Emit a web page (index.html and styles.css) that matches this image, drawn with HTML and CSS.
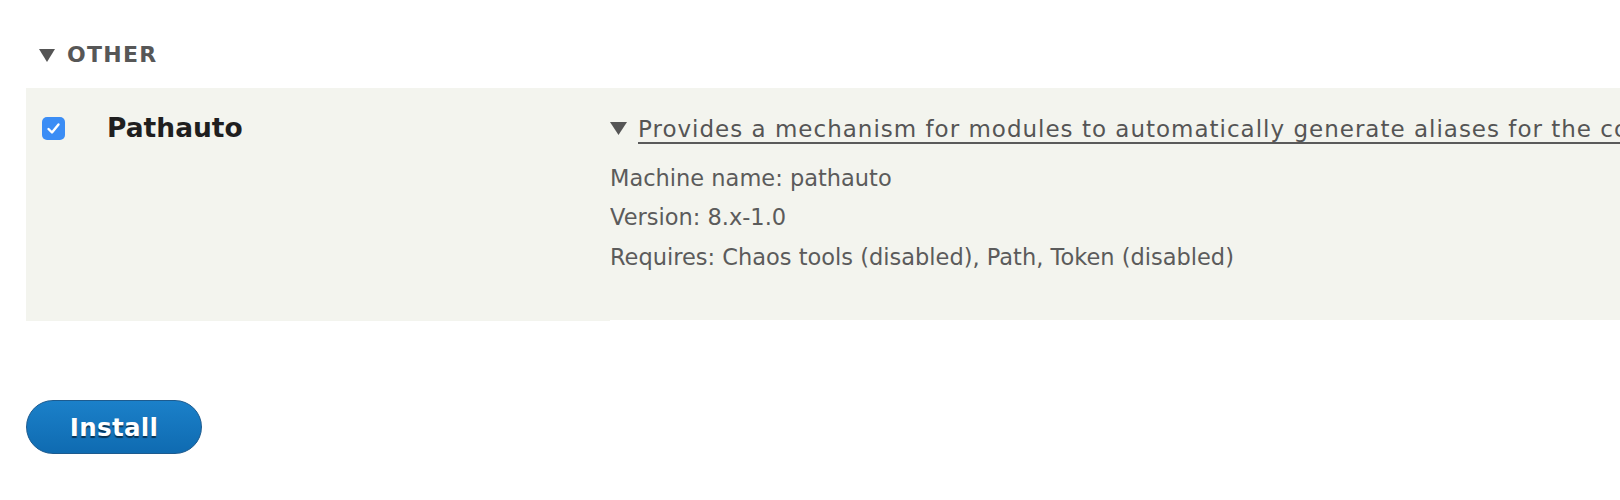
FILE: index.html
```html
<!DOCTYPE html>
<html>
<head>
<meta charset="utf-8">
<link rel="stylesheet" href="styles.css">
</head>
<body>
<div class="page">
  <div class="group-title">
    <svg class="tri" width="16" height="13" viewBox="0 0 16 13"><polygon points="0,0 16,0 8,13" fill="#555"/></svg><span>OTHER</span>
  </div>
  <div class="module-row">
    <div class="cell-check">
      <span class="checkbox"><svg width="23" height="23" viewBox="0 0 23 23"><path d="M6.5 12 L10 15.5 L16.5 7.5" fill="none" stroke="#fff" stroke-width="2.4" stroke-linecap="round" stroke-linejoin="round"/></svg></span>
    </div>
    <div class="cell-name">Pathauto</div>
    <div class="cell-desc">
      <div class="summary"><svg class="tri2" width="17" height="13" viewBox="0 0 17 13"><polygon points="0,0 17,0 8.5,13" fill="#555"/></svg><a class="sum-link">Provides a mechanism for modules to automatically generate aliases for the content they manage.</a></div>
      <div class="detail first">Machine name: pathauto</div>
      <div class="detail">Version: 8.x-1.0</div>
      <div class="detail">Requires: Chaos tools (disabled), Path, Token (disabled)</div>
    </div>
  </div>
  <div class="actions">
    <button class="btn">Install</button>
  </div>
</div>
</body>
</html>
```
FILE: styles.css
```css
html, body {
  margin: 0;
  padding: 0;
  background: #fff;
  overflow: hidden;
}
body {
  font-family: "DejaVu Sans", Verdana, sans-serif;
  color: #555;
}
.page {
  padding-left: 26px;
  width: 1594px;
}
.group-title {
  margin-top: 40px;
  padding-left: 13px;
  height: 30px;
  line-height: 30px;
  font-weight: bold;
  font-size: 22px;
  letter-spacing: 1.3px;
  color: #575757;
  white-space: nowrap;
}
.tri {
  vertical-align: 0;
  margin-right: 12px;
}
.module-row {
  display: flex;
  margin-top: 18px;
  height: 233px;
  align-items: flex-start;
  overflow: hidden;
}
.cell-check {
  width: 81px;
  height: 233px;
  background: #f3f4ee;
  box-sizing: border-box;
  padding: 29px 0 0 16px;
}
.checkbox {
  display: block;
  width: 23px;
  height: 23px;
  border-radius: 5px;
  background: #3b8df5;
}
.checkbox svg { display: block; }
.cell-name {
  width: 503px;
  height: 233px;
  background: #f3f4ee;
  box-sizing: border-box;
  padding-top: 22.5px;
  padding-left: 0;
  font-size: 26.5px;
  font-weight: bold;
  color: #1f1f1f;
  line-height: 34px;
}
.cell-desc {
  flex: 1;
  height: 232px;
  background: #f3f4ee;
  box-sizing: border-box;
  padding-top: 25px;
  white-space: nowrap;
  overflow: hidden;
  font-size: 22.5px;
  color: #5b5b5b;
}
.summary {
  height: 32px;
  line-height: 32px;
  font-size: 23px;
}
.tri2 {
  vertical-align: 2px;
  margin-right: 11px;
}
.sum-link {
  text-decoration: underline;
  text-underline-offset: 5px;
  text-decoration-thickness: 2px;
  text-decoration-color: #5a5a5a;
  color: #555;
  letter-spacing: 1px;
}
.detail {
  line-height: 39.5px;
}
.detail.first { margin-top: 13.5px; }
.actions {
  margin-top: 79px;
}
.btn {
  display: block;
  width: 176px;
  height: 54px;
  border-radius: 27px;
  border: 1px solid #1d5b8f;
  background: linear-gradient(#1b80c9, #0f6bb1);
  color: #fff;
  font-family: "DejaVu Sans", Verdana, sans-serif;
  font-weight: bold;
  font-size: 24.5px;
  letter-spacing: 0.3px;
  text-shadow: 0 2px 1px rgba(0,0,0,0.55);
  padding: 0;
}
```
